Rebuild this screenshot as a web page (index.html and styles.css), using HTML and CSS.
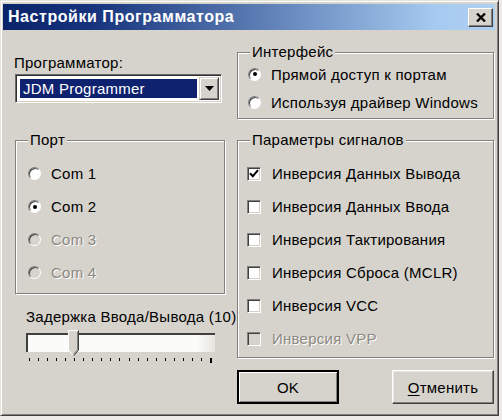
FILE: index.html
```html
<!DOCTYPE html>
<html lang="ru">
<head>
<meta charset="utf-8">
<title>Настройки Программатора</title>
<link rel="stylesheet" href="styles.css">
</head>
<body>
<div class="window">
  <div class="titlebar">
    <span class="title">Настройки Программатора</span>
    <span class="close"><svg width="10" height="9" viewBox="0 0 10 9"><path d="M1 0.5 L9 8.5 M9 0.5 L1 8.5" stroke="#000" stroke-width="2.3" fill="none"/></svg></span>
  </div>
  <div class="content">
    <div class="col">
      <div class="label">Программатор:</div>
      <div class="combo">
        <div class="combo-field"><span class="sel">JDM Programmer</span></div>
        <div class="combo-btn"><svg width="9" height="5" viewBox="0 0 9 5"><path d="M0 0 H9 L4.5 5 Z" fill="#000"/></svg></div>
      </div>
      <div class="group port">
        <span class="legend">Порт</span>
        <div class="rows port-rows">
          <div class="row"><span class="radio"></span><span>Com 1</span></div>
          <div class="row"><span class="radio on"><span class="dot"></span></span><span>Com 2</span></div>
          <div class="row disabled"><span class="radio"></span><span>Com 3</span></div>
          <div class="row disabled"><span class="radio"></span><span>Com 4</span></div>
        </div>
      </div>
      <div class="slider-label">Задержка Ввода/Вывода (10)</div>
      <div class="slider">
        <div class="track">
          <span class="thumb"><svg width="11" height="27" viewBox="0 0 11 27">
            <path d="M0.5 0.5 H10.5 V20 L5.5 26 L0.5 20 Z" fill="#d6d3cc"/>
            <path d="M0.5 20 V0.5 H10" stroke="#fff" fill="none"/>
            <path d="M10.5 0.5 V20 L5.5 26" stroke="#404040" fill="none"/>
            <path d="M9.5 1.5 V19.6 L5.5 24.4" stroke="#808080" fill="none"/>
            <path d="M0.5 20 L5 25.4" stroke="#fff" fill="none"/>
          </svg></span>
        </div>
        <div class="ticks">
          <span></span><span></span><span></span><span></span><span></span><span></span><span></span>
          <span></span><span></span><span></span><span></span><span></span><span></span><span></span>
          <span></span><span></span><span></span><span></span><span></span><span></span><span class="long"></span>
        </div>
      </div>
    </div>
    <div class="col">
      <div class="group iface">
        <span class="legend">Интерфейс</span>
        <div class="rows iface-rows">
          <div class="row"><span class="radio on"><span class="dot"></span></span><span>Прямой доступ к портам</span></div>
          <div class="row"><span class="radio"></span><span>Используя драйвер Windows</span></div>
        </div>
      </div>
      <div class="group params">
        <span class="legend">Параметры сигналов</span>
        <div class="rows params-rows">
          <div class="row"><span class="check"><svg width="10" height="9" viewBox="0 0 10 9"><path d="M1 4.2 L3.8 7.2 L9 1.2" stroke="#000" stroke-width="2" fill="none"/></svg></span><span>Инверсия Данных Вывода</span></div>
          <div class="row"><span class="check"></span><span>Инверсия Данных Ввода</span></div>
          <div class="row"><span class="check"></span><span>Инверсия Тактирования</span></div>
          <div class="row"><span class="check"></span><span>Инверсия Сброса (MCLR)</span></div>
          <div class="row"><span class="check"></span><span>Инверсия VCC</span></div>
          <div class="row disabled"><span class="check"></span><span>Инверсия VPP</span></div>
        </div>
      </div>
      <div class="buttons">
        <button class="btn default">OK</button>
        <button class="btn"><u>О</u>тменить</button>
      </div>
    </div>
  </div>
</div>
</body>
</html>
```

FILE: styles.css
```css
* { box-sizing: border-box; }
html, body { margin: 0; padding: 0; }
body {
  width: 502px;
  height: 420px;
  overflow: hidden;
  background: #ecebe8;
  font-family: "Liberation Sans", Arial, sans-serif;
  font-size: 15px;
  letter-spacing: 0.25px;
  color: #000;
}
.window {
  width: 499px;
  height: 416px;
  background: #d6d3cc;
  border: 1px solid;
  border-color: #e4e2dc #404040 #404040 #e4e2dc;
  box-shadow: inset 1px 1px 0 #fff, inset -1px -1px 0 #808080;
  padding: 3px 3px 2px 2px;
  display: flex;
  flex-direction: column;
}
.titlebar {
  height: 26px;
  flex: none;
  display: flex;
  align-items: center;
  justify-content: space-between;
  padding: 0 2px 0 5px;
  background: linear-gradient(90deg, #0a246a 0%, #16337c 18%, #a6caf0 88%, #b0d0f2 100%);
}
.title {
  color: #fff;
  font-weight: bold;
  font-size: 16px;
  letter-spacing: 0.55px;
}
.close {
  width: 25px;
  height: 19px;
  display: flex;
  align-items: center;
  justify-content: center;
  background: #d6d3cc;
  border: 1px solid;
  border-color: #fff #404040 #404040 #fff;
  box-shadow: inset -1px -1px 0 #808080;
}
.content {
  flex: 1;
  display: grid;
  grid-template-columns: 210px 257px;
  column-gap: 12px;
  padding-left: 12px;
}
.col { display: flex; flex-direction: column; min-width: 0; }
.label { margin-top: 24px; line-height: 18px; margin-left: -1px; }
.combo {
  margin-top: 2px;
  width: 207px;
  height: 29px;
  display: flex;
  border: 1px solid;
  border-color: #6a6a6a #fff #fff #6a6a6a;
  box-shadow: inset 1px 1px 0 #303030, inset -1px -1px 0 #d4d0c8;
  background: #fff;
  padding: 2px;
}
.combo-field { flex: 1; padding: 2px; }
.sel {
  display: flex;
  align-items: center;
  height: 100%;
  background: #0f2270;
  color: #fff;
  padding-left: 3px;
}
.combo-btn {
  width: 20px;
  flex: none;
  display: flex;
  align-items: center;
  justify-content: center;
  background: #d6d3cc;
  border: 1px solid;
  border-color: #d4d0c8 #404040 #404040 #d4d0c8;
  box-shadow: inset 1px 1px 0 #fff, inset -1px -1px 0 #808080;
}
.group {
  border: 1px solid #808080;
  box-shadow: inset 1px 1px 0 #fff, 1px 1px 0 #fff;
  display: flex;
  flex-direction: column;
}
.legend {
  align-self: flex-start;
  margin: -10px 0 -8px 12px;
  padding: 0 2px;
  line-height: 18px;
  background: #d6d3cc;
}
.rows { display: flex; flex-direction: column; }
.row { display: flex; align-items: center; gap: 10px; height: 33px; white-space: nowrap; }
.port { margin-top: 37px; height: 154px; }
.port-rows { padding: 16px 0 0 12px; }
.iface { margin-top: 22px; height: 67px; }
.iface-rows { padding: 7px 0 0 10px; }
.iface-rows .row { height: 28px; }
.params { margin-top: 21px; height: 218px; }
.params-rows { padding: 16px 0 0 9px; }
.params-rows .row { gap: 11px; }
.radio {
  width: 13px;
  height: 13px;
  flex: none;
  border-radius: 50%;
  background: #fff;
  border: 1px solid;
  border-color: #808080 #fff #fff #808080;
  box-shadow: inset 1px 1px 0 #404040;
  display: flex;
  align-items: center;
  justify-content: center;
}
.dot { width: 4px; height: 4px; border-radius: 50%; background: #000; }
.check {
  width: 14px;
  height: 14px;
  flex: none;
  background: #fff;
  border: 1px solid;
  border-color: #808080 #fff #fff #808080;
  box-shadow: inset 1px 1px 0 #404040, inset -1px -1px 0 #d4d0c8;
  display: flex;
  align-items: center;
  justify-content: center;
}
.disabled { color: #8c8982; text-shadow: 1px 1px 0 #fff; }
.disabled .radio, .disabled .check { background: #d6d3cc; }
.slider-label { margin-top: 14px; line-height: 18px; padding-left: 11px; white-space: nowrap; }
.slider { margin-top: 7px; padding-left: 11px; }
.track {
  position: relative;
  width: 189px;
  height: 19px;
  background: linear-gradient(90deg, #fbfbfa 0%, #fbfbfa 90%, #e6e5e1 100%);
  border-top: 2px solid #404040;
  border-left: 2px solid #404040;
}
.thumb { position: absolute; left: 40px; top: -5px; display: block; line-height: 0; }
.ticks {
  margin: 6px 0 0 3px;
  width: 183px;
  display: flex;
  justify-content: space-between;
  align-items: flex-start;
}
.ticks span { width: 1px; height: 3px; background: #000; }
.ticks span.long { width: 2px; height: 5px; }
.buttons { margin-top: 12px; display: flex; justify-content: space-between; }
.btn {
  width: 102px;
  height: 34px;
  font-family: "Liberation Sans", Arial, sans-serif;
  font-size: 15px;
  letter-spacing: 0.25px;
  color: #000;
  background: #d6d3cc;
  border: 1px solid;
  border-color: #fff #404040 #404040 #fff;
  box-shadow: inset -1px -1px 0 #808080, inset 1px 1px 0 #e8e6e0;
  padding: 0;
}
.btn.default {
  border: 2px solid #000;
  box-shadow: inset 1px 1px 0 #fff, inset -1px -1px 0 #808080;
}
.btn u { text-underline-offset: 2px; }
```
